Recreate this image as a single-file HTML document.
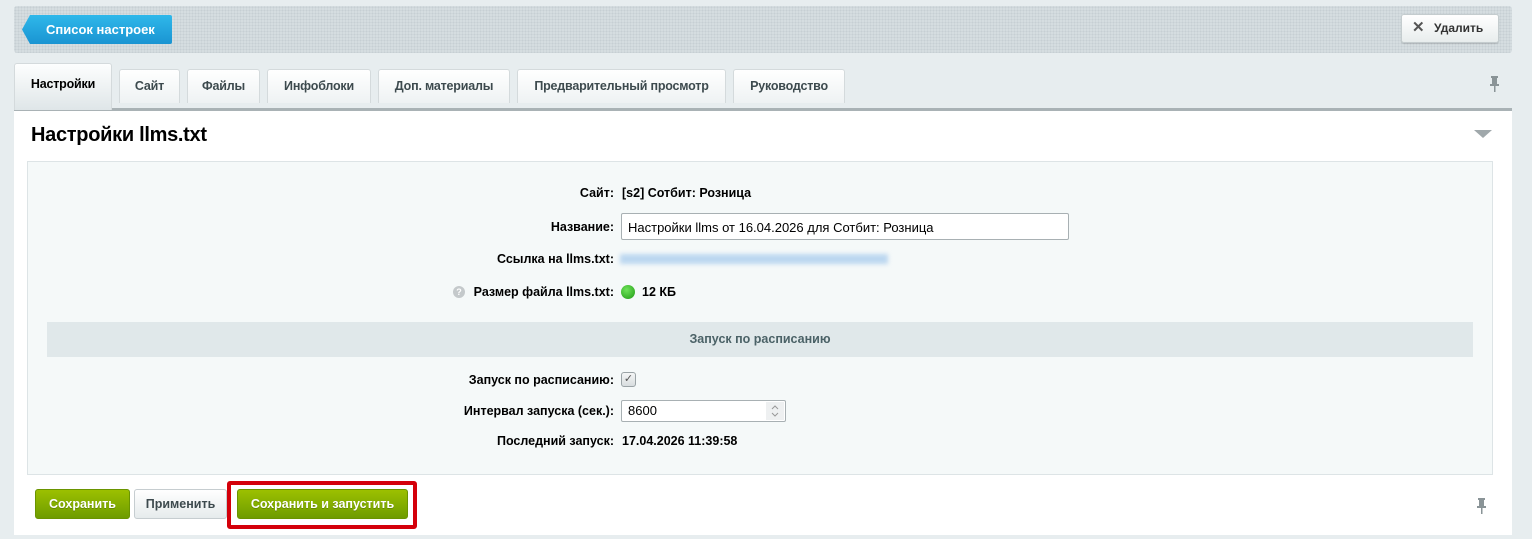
<!DOCTYPE html><html><head><meta charset="utf-8"><style>
*{box-sizing:border-box}body{margin:0;width:1532px;height:539px;background:#e7edef;font-family:"Liberation Sans",Arial,sans-serif;font-size:13px;position:relative;overflow:hidden;color:#000}
.a{position:absolute}
.bar{left:14px;top:6px;width:1498px;height:47px;background:#d5dde0;background-image:radial-gradient(#c6cfd3 1px,transparent 1px);background-size:3px 3px;border-radius:3px}
.blue{left:22px;top:15px;width:150px;height:29px;background:linear-gradient(#2fb8ea,#1a94d2);color:#fff;font-weight:bold;font-size:13px;line-height:29px;padding-left:24px;border-radius:2px;clip-path:polygon(8px 0,100% 0,100% 100%,8px 100%,0 50%)}
.del{left:1401px;top:14px;width:98px;height:29px;background:linear-gradient(#fff,#e8eded);border:1px solid #c4ccce;border-radius:3px;font-weight:bold;font-size:12px;color:#333;line-height:27px;padding-left:32px;box-shadow:0 1px 1px rgba(0,0,0,.15)}
.tab{top:69px;height:34px;background:linear-gradient(#fff,#eef2f3);border:1px solid #d4dadc;border-bottom:none;border-radius:3px 3px 0 0;font-weight:bold;font-size:12.5px;color:#3d4a4e;text-align:center;line-height:33px;letter-spacing:-.2px}
.tab.on{top:63px;height:47px;background:linear-gradient(#fdfefe,#dfe6e8);color:#000;line-height:41px}
.main{left:14px;top:108px;width:1498px;height:427px;background:#fff;border-top:3px solid #a9b2b5}
.panel{left:27px;top:161px;width:1466px;height:314px;background:#f5f9f9;border:1px solid #dde4e6}
.lbl{width:200px;text-align:right;font-weight:bold;font-size:12.5px}
.val{font-weight:bold;font-size:12.5px}
.inp{background:#fff;border:1px solid #a8b0b3;border-radius:2px;font-size:13px;padding-left:6px}
.btn{height:30px;border-radius:3px;font-weight:bold;font-size:12.5px;text-align:center;line-height:29px}
.g{background:linear-gradient(#9cc000,#6e9c00);color:#fff;border:1px solid #6a9400;text-shadow:0 1px 0 rgba(0,0,0,.2)}
</style></head><body>
<div class="a bar"></div>
<div class="a blue">Список настроек</div>
<div class="a del"><span class="a" style="left:10px;top:-1px;font-size:15px;color:#555">✕</span>Удалить</div>
<div class="a main"></div>
<div class="a tab on" style="left:14px;width:98px">Настройки</div>
<div class="a tab" style="left:119px;width:61px">Сайт</div>
<div class="a tab" style="left:187px;width:73px">Файлы</div>
<div class="a tab" style="left:267px;width:104px">Инфоблоки</div>
<div class="a tab" style="left:378px;width:132px">Доп. материалы</div>
<div class="a tab" style="left:517px;width:209px">Предварительный просмотр</div>
<div class="a tab" style="left:733px;width:112px">Руководство</div>
<svg class="a" style="left:1488px;top:75px" width="14" height="18"><rect x="3" y="1" width="7" height="2" fill="#8a9497"/><rect x="4" y="3" width="5" height="7" fill="#8a9497"/><rect x="2" y="9" width="9" height="2" fill="#8a9497"/><rect x="6" y="11" width="1.5" height="6" fill="#8a9497"/></svg>
<div class="a" style="left:31px;top:124px;font-size:20px;font-weight:bold;letter-spacing:-.3px">Настройки llms.txt</div>
<svg class="a" style="left:1474px;top:130px" width="18" height="9"><path d="M0 0H18L9 8Z" fill="#a0a8ab"/></svg>
<div class="a panel"></div>
<div class="a lbl" style="left:414px;top:186px">Сайт:</div><div class="a val" style="left:622px;top:186px">[s2] Сотбит: Розница</div>
<div class="a lbl" style="left:414px;top:220px">Название:</div>
<div class="a inp" style="left:621px;top:213px;width:448px;height:27px;line-height:27px">Настройки llms от 16.04.2026 для Сотбит: Розница</div>
<div class="a lbl" style="left:414px;top:252px">Ссылка на llms.txt:</div>
<div class="a" style="left:620px;top:254px;width:268px;height:10px;background:#bcd7f0;filter:blur(2px)"></div>
<div class="a" style="left:453px;top:286px;width:12px;height:12px;border-radius:50%;background:#c4c9cb;color:#fff;font-size:9px;text-align:center;line-height:12px;font-weight:bold">?</div>
<div class="a lbl" style="left:414px;top:285px">Размер файла llms.txt:</div>
<div class="a" style="left:621px;top:285px;width:14px;height:14px;border-radius:50%;background:radial-gradient(circle at 40% 35%,#6fe35a,#1f9a14)"></div>
<div class="a val" style="left:642px;top:285px">12 КБ</div>
<div class="a" style="left:47px;top:322px;width:1426px;height:35px;background:#e0e8ea;text-align:center;line-height:35px;font-weight:bold;font-size:12.5px;color:#4b6267">Запуск по расписанию</div>
<div class="a lbl" style="left:414px;top:373px">Запуск по расписанию:</div>
<div class="a" style="left:621px;top:372px;width:15px;height:15px;border:1px solid #9aa3a6;border-radius:3px;background:linear-gradient(#f4f6f6,#d8dddf);font-size:11px;line-height:13px;text-align:center;color:#555">✓</div>
<div class="a lbl" style="left:414px;top:404px">Интервал запуска (сек.):</div>
<div class="a inp" style="left:621px;top:400px;width:165px;height:22px;line-height:20px">8600<svg class="a" style="right:1px;top:1px" width="18" height="18"><rect width="18" height="18" fill="#eef0f1"/><path d="M6 7L9 4L12 7M6 11L9 14L12 11" stroke="#999" fill="none"/></svg></div>
<div class="a lbl" style="left:414px;top:434px">Последний запуск:</div><div class="a val" style="left:622px;top:434px">17.04.2026 11:39:58</div>
<div class="a btn g" style="left:35px;top:489px;width:95px">Сохранить</div>
<div class="a btn" style="left:134px;top:489px;width:93px;background:linear-gradient(#fff,#e6ebec);border:1px solid #c6cdd0;color:#3d4a4e">Применить</div>
<div class="a" style="left:227px;top:481px;width:190px;height:48px;border:4px solid #d4000a;border-radius:3px"></div>
<div class="a btn g" style="left:237px;top:489px;width:171px">Сохранить и запустить</div>
<svg class="a" style="left:1475px;top:497px" width="14" height="18"><rect x="3" y="1" width="7" height="2" fill="#8a9497"/><rect x="4" y="3" width="5" height="7" fill="#8a9497"/><rect x="2" y="9" width="9" height="2" fill="#8a9497"/><rect x="6" y="11" width="1.5" height="6" fill="#8a9497"/></svg>
</body></html>
